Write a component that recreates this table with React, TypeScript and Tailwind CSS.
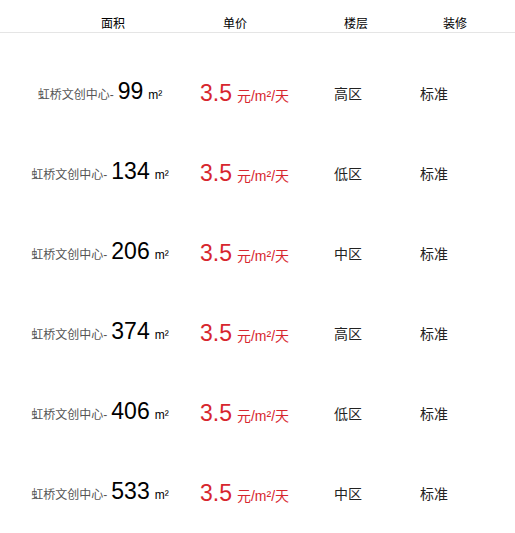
const rows = [
  { area: 99, floor: "高区" },
  { area: 134, floor: "低区" },
  { area: 206, floor: "中区" },
  { area: 374, floor: "高区" },
  { area: 406, floor: "低区" },
  { area: 533, floor: "中区" },
];

export default function App() {
  return (
    <div
      className="w-[515px] h-[533px] overflow-hidden bg-white"
      style={{ fontFamily: '"Liberation Sans", "Noto Sans CJK SC", sans-serif' }}
    >
      {/* Header */}
      <div className="h-[33px] flex items-center border-b border-[#e5e5e5] text-xs text-black pt-[16px]">
        <span className="ml-[101px]">面积</span>
        <span className="ml-[98px]">单价</span>
        <span className="ml-[97px]">楼层</span>
        <span className="ml-[75px]">装修</span>
      </div>

      {/* List */}
      <div className="pt-[21px]">
        {rows.map((r, i) => (
          <div key={i} className="h-20 flex items-center">
            <div className="w-[200px] flex items-baseline justify-center mb-[6px]">
              <span className="text-xs text-[#555]">虹桥文创中心-</span>
              <span className="text-[23px] text-black ml-[4px] leading-none">{r.area}</span>
              <span className="text-xs text-black ml-[5px] font-medium">m²</span>
            </div>
            <div className="w-[134px] flex items-baseline text-[#d7262e]">
              <span className="text-[23px] leading-none">3.5</span>
              <span className="text-sm ml-[5px]">元/m²/天</span>
            </div>
            <div className="w-[86px] text-sm text-[#222]">{r.floor}</div>
            <div className="text-sm text-[#222]">标准</div>
          </div>
        ))}
      </div>
    </div>
  );
}
